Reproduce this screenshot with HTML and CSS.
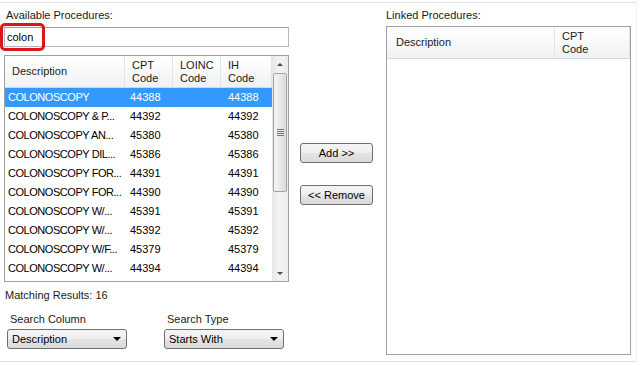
FILE: index.html
```html
<!DOCTYPE html>
<html lang="en">

<head>
    <meta charset="UTF-8">
    <title>Procedures</title>
    <link rel="stylesheet" href="styles.css">
</head>

<body>
    <div class="window">
        <!-- available procedures -->
        <section class="left">
            <div class="label">Available Procedures:</div>
            <div class="search-box">
                <input class="search" type="text" value="colon">
                <span class="callout"></span>
            </div>

            <div class="listview avail">
                <div class="lv-main">
                    <div class="lv-head">
                        <div class="col one">Description</div>
                        <div class="col">CPT<br>Code</div>
                        <div class="col">LOINC<br>Code</div>
                        <div class="col">IH<br>Code</div>
                    </div>
                    <div class="lv-row selected"><span class="c-desc">COLONOSCOPY</span><span class="c-cpt">44388</span><span></span><span class="c-ih">44388</span></div>
                    <div class="lv-row"><span class="c-desc">COLONOSCOPY &amp; P...</span><span class="c-cpt">44392</span><span></span><span class="c-ih">44392</span></div>
                    <div class="lv-row"><span class="c-desc">COLONOSCOPY AN...</span><span class="c-cpt">45380</span><span></span><span class="c-ih">45380</span></div>
                    <div class="lv-row"><span class="c-desc">COLONOSCOPY DIL...</span><span class="c-cpt">45386</span><span></span><span class="c-ih">45386</span></div>
                    <div class="lv-row"><span class="c-desc">COLONOSCOPY FOR...</span><span class="c-cpt">44391</span><span></span><span class="c-ih">44391</span></div>
                    <div class="lv-row"><span class="c-desc">COLONOSCOPY FOR...</span><span class="c-cpt">44390</span><span></span><span class="c-ih">44390</span></div>
                    <div class="lv-row"><span class="c-desc">COLONOSCOPY W/...</span><span class="c-cpt">45391</span><span></span><span class="c-ih">45391</span></div>
                    <div class="lv-row"><span class="c-desc">COLONOSCOPY W/...</span><span class="c-cpt">45392</span><span></span><span class="c-ih">45392</span></div>
                    <div class="lv-row"><span class="c-desc">COLONOSCOPY W/F...</span><span class="c-cpt">45379</span><span></span><span class="c-ih">45379</span></div>
                    <div class="lv-row"><span class="c-desc">COLONOSCOPY W/...</span><span class="c-cpt">44394</span><span></span><span class="c-ih">44394</span></div>
                </div>
                <!-- scrollbar -->
                <div class="vscroll">
                    <span class="arrow up"></span>
                    <div class="track">
                        <div class="thumb"><span class="grip"></span></div>
                    </div>
                    <span class="arrow down"></span>
                </div>
            </div>

            <div class="count">Matching Results: 16</div>

            <div class="filters">
                <div class="filter">
                    <div class="label">Search Column</div>
                    <div class="combo">Description<span class="caret"></span></div>
                </div>
                <div class="filter">
                    <div class="label">Search Type</div>
                    <div class="combo">Starts With<span class="caret"></span></div>
                </div>
            </div>
        </section>

        <!-- add / remove -->
        <section class="middle">
            <button class="btn">Add &gt;&gt;</button>
            <button class="btn">&lt;&lt; Remove</button>
        </section>

        <!-- linked procedures -->
        <section class="right">
            <div class="label">Linked Procedures:</div>
            <div class="listview linked">
                <div class="lv-main">
                    <div class="lv-head">
                        <div class="col one">Description</div>
                        <div class="col">CPT<br>Code</div>
                    </div>
                </div>
            </div>
        </section>
    </div>
</body>

</html>
```

FILE: styles.css
```css
:root {
    --border: #a0a0a0;
    --line: #e2e3e4;
    --select: #3399ff;
}

body {
    margin: 0;
    font-family: "Liberation Sans", Arial, sans-serif;
    font-size: 11px;
    color: #1a1a1a;
    background: #fff;
}

/* outer frame */
.window {
    display: flex;
    margin-top: 2px;
    width: 636px;
    height: 358px;
    border-top: 1px solid var(--line);
    border-bottom: 1px solid var(--line);
    border-right: 1px solid #f3f3f3;
}

.label {
    line-height: 13px;
}

/* left side */
.left {
    width: 285px;
    padding-left: 4px;
}

.left > .label {
    margin: 6px 0 0 2px;
}

.search-box {
    position: relative;
    margin-top: 5px;
}

.search {
    display: block;
    box-sizing: border-box;
    width: 285px;
    height: 20px;
    margin: 0;
    padding: 0 2px;
    border: 1px solid #b5b8bd;
    border-top-color: #9a9da3;
    font: inherit;
    font-size: 11px;
    color: #000;
    outline: none;
}

/* red highlight round the search word */
.callout {
    position: absolute;
    left: -4px;
    top: -4px;
    width: 39px;
    height: 22px;
    border: 3px solid #d9181e;
    border-radius: 5px;
}

/* list views */
.listview {
    display: flex;
    box-sizing: border-box;
    border: 1px solid var(--border);
    overflow: hidden;
    background: #fff;
}

.avail {
    margin-top: 8px;
    width: 285px;
    height: 227px;
}

.lv-main {
    flex: 1;
    overflow: hidden;
}

.lv-head {
    display: grid;
    grid-template-columns: 120px 48px 48px 1fr;
    height: 32px;
    background: linear-gradient(#ffffff, #f7f8f9 55%, #f0f1f3);
    border-bottom: 1px solid #d6d8dc;
    box-sizing: border-box;
}

.lv-head .col {
    display: flex;
    align-items: center;
    padding-left: 7px;
    line-height: 13px;
    border-right: 1px solid #e3e4e6;
}

.lv-row {
    display: grid;
    grid-template-columns: 120px 48px 48px 1fr;
    height: 19px;
    line-height: 19px;
    color: #000;
    white-space: nowrap;
}

.lv-row span {
    overflow: hidden;
}

.c-desc {
    padding-left: 3px;
    letter-spacing: -0.45px;
}

.c-cpt {
    padding-left: 5px;
}

.c-ih {
    padding-left: 7px;
}

.lv-row.selected {
    background: var(--select);
    color: #fff;
}

/* scrollbar */
.vscroll {
    display: flex;
    flex-direction: column;
    width: 16px;
    background: linear-gradient(90deg, #e6e6e6, #f2f2f2 40%, #ededed);
}

.arrow {
    height: 16px;
    display: flex;
    align-items: center;
    justify-content: center;
}

.arrow::before {
    content: "";
    border-left: 3px solid transparent;
    border-right: 3px solid transparent;
}

.arrow.up::before {
    border-bottom: 3px solid #4a4a4a;
}

.arrow.down::before {
    border-top: 3px solid #4a4a4a;
}

.track {
    flex: 1;
    padding-top: 1px;
}

.thumb {
    display: flex;
    align-items: center;
    justify-content: center;
    box-sizing: border-box;
    height: 119px;
    margin: 0 1px;
    border: 1px solid #a3a3a3;
    border-radius: 2px;
    background: linear-gradient(90deg, #f4f4f4, #e8e8e8 50%, #dcdcdc);
}

.grip {
    width: 7px;
    height: 7px;
    background: repeating-linear-gradient(#7a7a7a 0 1px, transparent 1px 2px);
}

.count {
    margin-top: 7px;
    margin-left: 1px;
    line-height: 13px;
}

.filters {
    display: flex;
    gap: 37px;
    margin-top: 11px;
    padding-left: 3px;
}

.filter .label {
    padding-left: 3px;
}

.combo {
    display: flex;
    align-items: center;
    justify-content: space-between;
    box-sizing: border-box;
    width: 120px;
    height: 20px;
    margin-top: 3px;
    padding: 0 5px 0 4px;
    border: 1px solid #707070;
    border-radius: 3px;
    background: linear-gradient(#f4f4f4, #eeeeee 50%, #e4e4e4 51%, #dadada);
    color: #000;
}

.caret {
    border-left: 4px solid transparent;
    border-right: 4px solid transparent;
    border-top: 4px solid #000;
}

/* buttons */
.middle {
    display: flex;
    flex-direction: column;
    align-items: flex-start;
    width: 86px;
    padding: 140px 0 0 11px;
    gap: 22px;
}

.btn {
    width: 73px;
    height: 20px;
    padding: 0;
    border: 1px solid #707070;
    border-radius: 3px;
    background: linear-gradient(#f4f4f4, #eeeeee 50%, #e4e4e4 51%, #dadada);
    font: inherit;
    font-size: 11px;
    color: #000;
}

/* right side */
.right {
    width: 245px;
}

.right > .label {
    margin-top: 6px;
}

.linked {
    margin-top: 4px;
    height: 329px;
}

.linked .lv-head {
    grid-template-columns: 168px 1fr;
}

.linked .lv-head .col.one {
    padding-left: 9px;
}
```
